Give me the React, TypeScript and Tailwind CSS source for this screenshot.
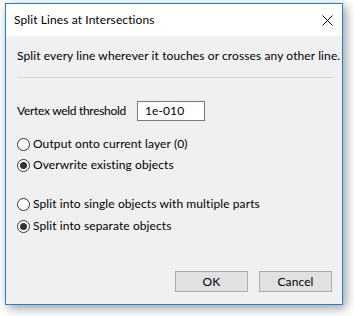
import React from "react";

function Radio({ checked, label }: { checked: boolean; label: string }) {
  return (
    <div className="flex items-center h-4">
      <div className="w-[13px] h-[13px] rounded-full border border-[#333333] bg-white flex items-center justify-center">
        {checked && <div className="w-[7px] h-[7px] rounded-full bg-[#333333]" />}
      </div>
      <span className="ml-[3px] leading-4 whitespace-nowrap">{label}</span>
    </div>
  );
}

export default function App() {
  return (
    <div className="w-[354px] h-[316px] bg-white pt-[3px] pl-[5px] text-[12px] tracking-[0.1px] text-black font-['Lato',sans-serif]">
      <div className="w-[338px] h-[302px] border border-[#1883d7] bg-[#f0f0f0] flex flex-col shadow-[3px_3px_10px_rgba(0,0,0,0.4)]">
        <div className="h-8 bg-white flex items-center justify-between pl-2 pr-[9px]">
          <span className="leading-4 whitespace-nowrap">Split Lines at Intersections</span>
          <svg width="11" height="11" viewBox="0 0 11 11">
            <path d="M0.5 0.5 L10.5 10.5 M10.5 0.5 L0.5 10.5" stroke="#000" strokeWidth="1" />
          </svg>
        </div>
        <div className="flex-1 flex flex-col pl-[11px] pr-[9px] pt-3 pb-3">
          <div className="leading-4 whitespace-nowrap">Split every line wherever it touches or crosses any other line.</div>
          <div className="mt-[13px] h-px bg-[#d9d9d9]" />
          <div className="mt-[23px] flex items-center h-5">
            <span className="w-[120px] leading-4 whitespace-nowrap tracking-[-0.3px]">Vertex weld threshold</span>
            <div className="w-[68px] h-5 border border-[#7a7a7a] bg-white flex items-center pl-[7px] leading-4">1e-010</div>
          </div>
          <div className="mt-[15px]">
            <Radio checked={false} label="Output onto current layer (0)" />
          </div>
          <div className="mt-[5px]">
            <Radio checked={true} label="Overwrite existing objects" />
          </div>
          <div className="mt-[23px]">
            <Radio checked={false} label="Split into single objects with multiple parts" />
          </div>
          <div className="mt-[6px]">
            <Radio checked={true} label="Split into separate objects" />
          </div>
          <div className="flex-1" />
          <div className="flex justify-end gap-[11px] pr-[1px]">
            <button className="w-[73px] h-[21px] border border-[#adadad] bg-[#e1e1e1] leading-4">OK</button>
            <button className="w-[73px] h-[21px] border border-[#adadad] bg-[#e1e1e1] leading-4">Cancel</button>
          </div>
        </div>
      </div>
    </div>
  );
}
